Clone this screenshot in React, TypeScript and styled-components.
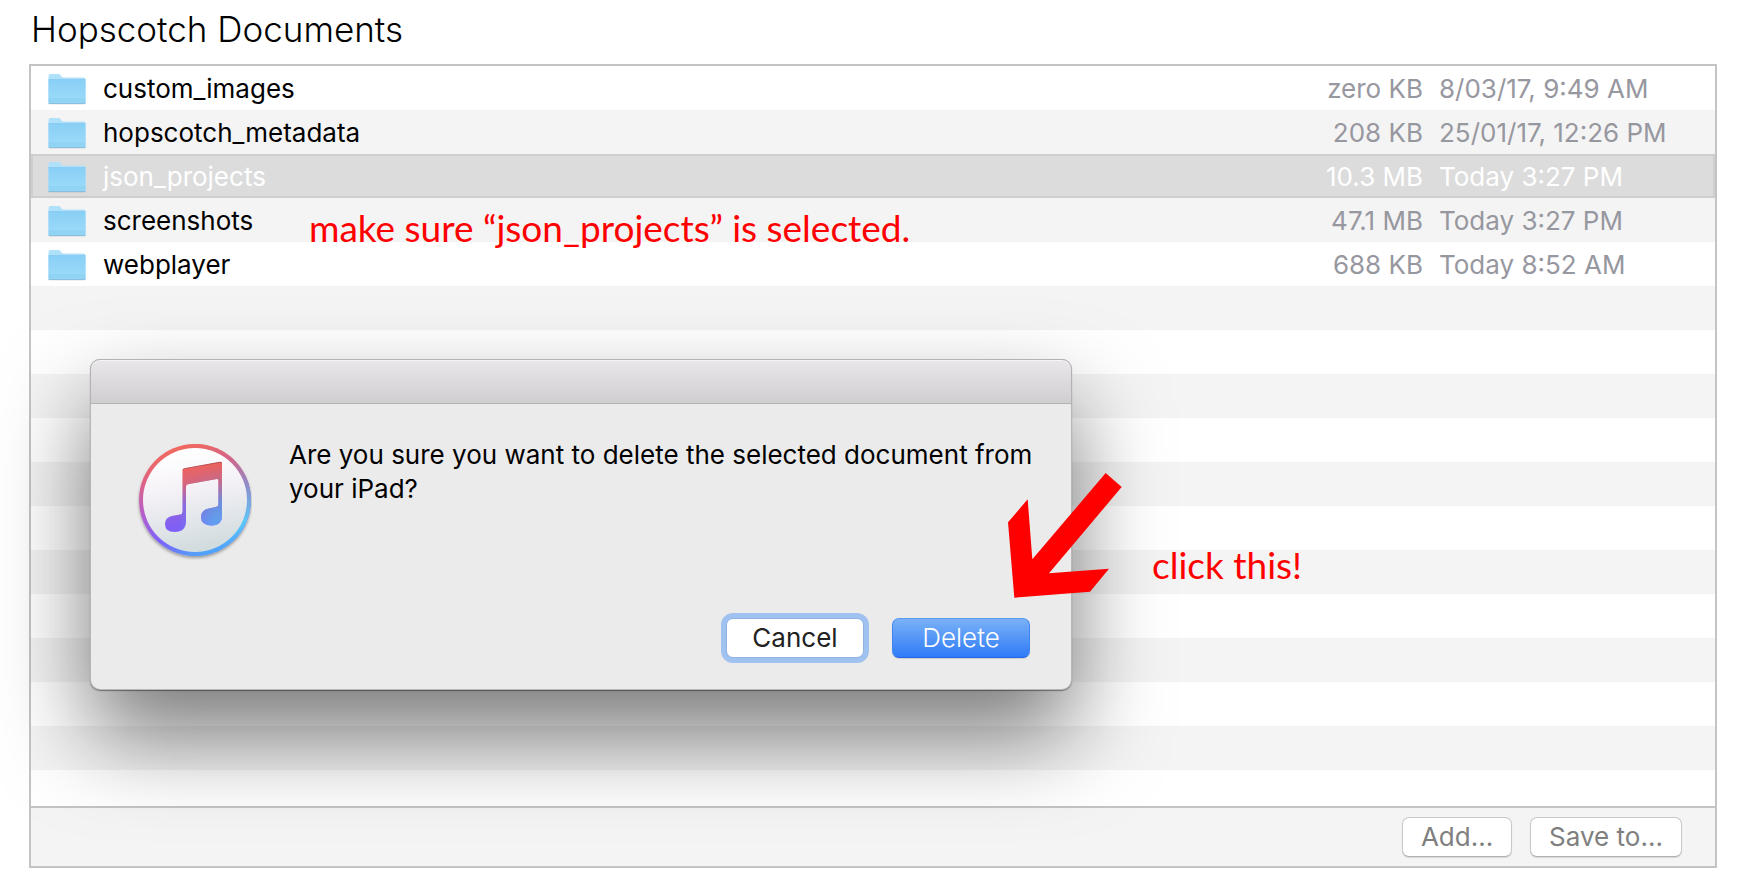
import React from "react";
import styled, { createGlobalStyle, css } from "styled-components";

const GlobalStyle = createGlobalStyle`
  *, *::before, *::after { box-sizing: border-box; }
  body { margin: 0; background: #fff; }
`;

const Page = styled.main`
  position: relative;
  display: flex;
  flex-direction: column;
  min-height: 100vh;
  padding: 0 20px 27px 29px;
  overflow: hidden;
  color: #000;
  font-family: Inter, "Liberation Sans", sans-serif;
  font-size: 26px;
`;

const Title = styled.h1`
  margin: 0;
  padding: 7px 2px 13px;
  font-size: 35px;
  font-weight: 300;
  line-height: 44px;
`;

const Panel = styled.section`
  flex: 1;
  display: flex;
  flex-direction: column;
  border: 2px solid #c4c4c4;
`;

const List = styled.div`
  flex: 1;
  background: repeating-linear-gradient(#fff 0 44px, #f4f4f4 44px 88px);
`;

const FileTable = styled.table`
  width: 100%;
  border-collapse: collapse;
  table-layout: fixed;
`;

const NameCol = styled.col``;
const SizeCol = styled.col`
  width: 160px;
`;
const DateCol = styled.col`
  width: 292px;
`;

const Row = styled.tr<{ $selected?: boolean }>`
  height: 44px;
  ${(p) =>
    p.$selected &&
    css`
      background: #dcdcdc;
      outline: 2px solid #cecece;
      outline-offset: -2px;
    `}
`;

const Cell = styled.td<{ $tone: string; $align?: string }>`
  padding: 2px 0 0;
  color: ${(p) => p.$tone};
  text-align: ${(p) => p.$align ?? "left"};
  line-height: 42px;
  white-space: nowrap;
`;

const DateCell = styled(Cell)`
  padding-left: 16px;
`;

const FileName = styled.span`
  display: flex;
  align-items: center;
  gap: 17px;
  padding-left: 17px;
`;

const Footer = styled.footer`
  display: flex;
  align-items: center;
  justify-content: flex-end;
  gap: 18px;
  height: 60px;
  padding-right: 33px;
  border-top: 2px solid #c4c4c4;
  background: #f4f4f4;
`;

const Button = styled.button<{ $width: number }>`
  width: ${(p) => p.$width}px;
  height: 40px;
  padding: 0;
  border: 1px solid #c8c8c8;
  border-bottom-color: #b0b0b0;
  border-radius: 7px;
  background: #fff;
  box-shadow: 0 1px 1px rgba(0, 0, 0, 0.12);
  color: #7f7f7f;
  font: inherit;
  line-height: 36px;
`;

const CancelButton = styled(Button)`
  border-color: #8fb2e2;
  box-shadow: 0 0 0 5px #a0c2f0;
  color: #222;
`;

const DeleteButton = styled(Button)`
  border-color: #5a9bf2 #3f86f3 #2462e6;
  background: linear-gradient(#7ab1f6, #2f7bf8);
  color: #fff;
  font-weight: 300;
`;

const Dialog = styled.div`
  position: absolute;
  top: 359px;
  left: 90px;
  width: 982px;
  border-radius: 10px;
  background: #ebebeb;
  box-shadow:
    inset 0 0 0 1px rgba(0, 0, 0, 0.22),
    0 1px 1px rgba(0, 0, 0, 0.4),
    0 45px 90px rgba(0, 0, 0, 0.53);
`;

const DialogBar = styled.div`
  height: 45px;
  border: 1px solid #b4b2b4;
  border-radius: 10px 10px 0 0;
  background: linear-gradient(#e9e7e9, #d1ced1);
  box-shadow: inset 0 1px 0 #f6f5f6;
`;

const DialogBody = styled.div`
  display: flex;
  gap: 37px;
  padding: 34px 0 0 44px;
`;

const Message = styled.p`
  margin: 0;
  line-height: 34px;
`;

const DialogActions = styled.div`
  display: flex;
  justify-content: flex-end;
  gap: 28px;
  padding: 58px 42px 32px;
`;

const Note = styled.p<{ $x: number; $y: number }>`
  position: absolute;
  top: ${(p) => p.$y}px;
  left: ${(p) => p.$x}px;
  margin: 0;
  color: #f00;
  font-family: Lato, "Liberation Sans", sans-serif;
  font-size: 37px;
  line-height: 44px;
  white-space: nowrap;
`;

const Arrow = styled.svg`
  position: absolute;
  top: 473px;
  left: 1008px;
`;

function FolderIcon() {
  return (
    <svg width="38" height="32" viewBox="0 0 39 32" preserveAspectRatio="none" aria-hidden="true">
      <defs>
        <linearGradient id="folder" x1="0" y1="0" x2="0" y2="1">
          <stop offset="0" stopColor="#89cff5" />
          <stop offset="1" stopColor="#9edcfb" />
        </linearGradient>
      </defs>
      <path d="M1 30.500h37v1h-37z" fill="#000" opacity=".12" />
      <path d="M.5 3q0-2 2-2h8.500c2 0 2.500 3.500 5 3.500h20.500q2 0 2 2v23q0 1-1 1h-36q-1 0-1-1z" fill="#b0e1fb" />
      <path d="M.5 6.500h38v23q0 1-1 1h-36q-1 0-1-1z" fill="url(#folder)" />
      <path d="M.5 6.500h38M.5 26h38M.5 28h38" stroke="#7fc4ea" strokeWidth="1" opacity=".6" />
      <path d="M.5 30.300h38" stroke="#7bb7d8" strokeWidth="1" />
    </svg>
  );
}

function MusicIcon() {
  return (
    <svg width="118" height="122" viewBox="0 -1 118 122" aria-hidden="true">
      <defs>
        <linearGradient id="disc" x1="0" y1="0" x2=".2" y2="1">
          <stop offset="0.100" stopColor="#fff" />
          <stop offset="0.450" stopColor="#f5f2f7" />
          <stop offset="1" stopColor="#d3dde0" />
        </linearGradient>
        <linearGradient id="warm" x1=".35" y1="0" x2=".65" y2="1">
          <stop offset="0" stopColor="#f4695a" />
          <stop offset=".2" stopColor="#e2647c" />
          <stop offset=".5" stopColor="#b45fd0" />
          <stop offset=".75" stopColor="#7d62fb" />
          <stop offset="1" stopColor="#4f9bfa" />
        </linearGradient>
        <linearGradient id="cool" x1=".35" y1="0" x2=".65" y2="1">
          <stop offset="0" stopColor="#f4695a" />
          <stop offset=".25" stopColor="#d2658a" />
          <stop offset=".5" stopColor="#8f8bc8" />
          <stop offset=".8" stopColor="#5bc8f8" />
          <stop offset="1" stopColor="#4f9bfa" />
        </linearGradient>
        <linearGradient id="fade" x1="0" y1="0" x2="1" y2="0">
          <stop offset=".35" stopColor="#000" />
          <stop offset=".65" stopColor="#fff" />
        </linearGradient>
        <mask id="right" maskUnits="userSpaceOnUse" x="0" y="0" width="118" height="122">
          <rect width="118" height="122" fill="url(#fade)" />
        </mask>
        <linearGradient id="note" gradientUnits="userSpaceOnUse" x1="58" y1="22" x2="66" y2="90">
          <stop offset="0" stopColor="#f2655c" />
          <stop offset=".25" stopColor="#dc6479" />
          <stop offset=".55" stopColor="#9263dc" />
          <stop offset="1" stopColor="#795fff" />
        </linearGradient>
        <linearGradient id="noteCool" gradientUnits="userSpaceOnUse" x1="80" y1="22" x2="86" y2="84">
          <stop offset="0" stopColor="#e8625f" />
          <stop offset=".3" stopColor="#bd6c94" />
          <stop offset=".6" stopColor="#6c8ddc" />
          <stop offset="1" stopColor="#5fa4f5" />
        </linearGradient>
        <filter id="discShadow" x="-10%" y="-10%" width="120%" height="120%">
          <feDropShadow dx="0" dy="2" stdDeviation="1.500" floodOpacity=".35" />
        </filter>
        <path
          id="notes"
          d="M45.500 27.500Q45.500 26 47 25.500L83 19Q85 18.600 85 20.500V73Q85 82.500 74.500 82.500Q64 82.500 64 74Q64 67 72 65.500L79 64Q81.500 63.500 81.500 61V37.500Q81.500 35.600 79.500 36L51 41.200Q49 41.600 49 43.500V78Q49 89 37.500 89Q28 89 28 81Q28 74 36 72.700L43 71.500Q45.500 71 45.500 68.500Z"
        />
      </defs>
      <circle cx="61" cy="61" r="56" fill="url(#warm)" filter="url(#discShadow)" />
      <circle cx="61" cy="61" r="56" fill="url(#cool)" mask="url(#right)" />
      <circle cx="61" cy="61" r="52" fill="url(#disc)" />
      <g transform="translate(3 4)">
        <use href="#notes" fill="url(#note)" />
        <use href="#notes" fill="url(#noteCool)" mask="url(#right)" />
        <path d="M46 27Q46 26 47 25.700L83 19.200Q84.500 19 84.800 20" fill="none" stroke="#963a4c" opacity=".55" />
      </g>
    </svg>
  );
}

const files = [
  { name: "custom_images", size: "zero KB", date: "8/03/17, 9:49 AM" },
  { name: "hopscotch_metadata", size: "208 KB", date: "25/01/17, 12:26 PM" },
  { name: "json_projects", size: "10.3 MB", date: "Today 3:27 PM", selected: true },
  { name: "screenshots", size: "47.1 MB", date: "Today 3:27 PM" },
  { name: "webplayer", size: "688 KB", date: "Today 8:52 AM" },
];

export default function App() {
  return (
    <>
      <GlobalStyle />
      <Page>
        <Title>Hopscotch Documents</Title>
        <Panel>
          <List>
            <FileTable>
              <colgroup>
                <NameCol />
                <SizeCol />
                <DateCol />
              </colgroup>
              <tbody>
                {files.map((file) => {
                  const detail = file.selected ? "#fff" : "#97979f";
                  return (
                    <Row key={file.name} $selected={file.selected}>
                      <Cell $tone={file.selected ? "#fff" : "#000"}>
                        <FileName>
                          <FolderIcon />
                          {file.name}
                        </FileName>
                      </Cell>
                      <Cell $tone={detail} $align="right">
                        {file.size}
                      </Cell>
                      <DateCell $tone={detail}>{file.date}</DateCell>
                    </Row>
                  );
                })}
              </tbody>
            </FileTable>
          </List>
          <Footer>
            <Button $width={110}>Add...</Button>
            <Button $width={152}>Save to...</Button>
          </Footer>
        </Panel>

        <Dialog role="alertdialog" aria-describedby="message">
          <DialogBar />
          <DialogBody>
            <MusicIcon />
            <Message id="message">
              Are you sure you want to delete the selected document from
              <br />
              your iPad?
            </Message>
          </DialogBody>
          <DialogActions>
            <CancelButton $width={138}>Cancel</CancelButton>
            <DeleteButton $width={138}>Delete</DeleteButton>
          </DialogActions>
        </Dialog>

        <Note $x={309} $y={206}>make sure “json_projects” is selected.</Note>
        <Note $x={1152} $y={543}>click this!</Note>
        <Arrow width="114" height="125" viewBox="0 0 342 375" aria-hidden="true">
          <path d="M293 0L341 42L123 301L303 287L246 356L19 374L0 148L59 79L73 259Z" fill="#f00" />
        </Arrow>
      </Page>
    </>
  );
}
